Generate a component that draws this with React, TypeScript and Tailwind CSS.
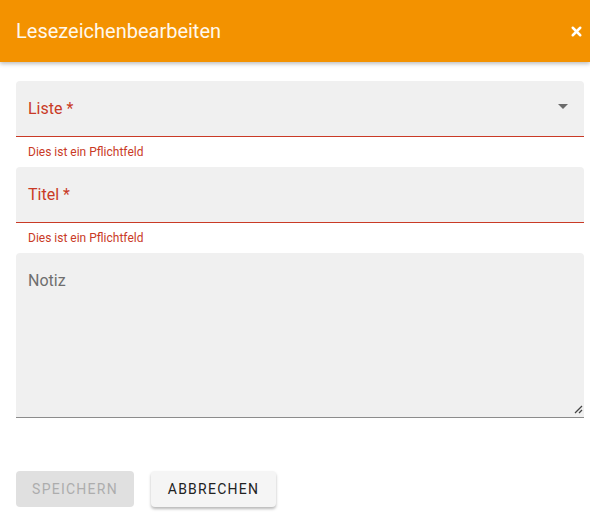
import { X } from 'lucide-react';

const red = 'text-[#c93a26]';

export default function App() {
  return (
    <div className="w-[590px] h-[522px] bg-white font-['Roboto',sans-serif] overflow-hidden">
      {/* Header */}
      <div className="h-[62px] bg-[#f39200] flex items-center justify-between pl-4 pr-[6px] shadow-[0_2px_4px_rgba(0,0,0,0.25)] relative z-10">
        <h1 className="text-[20px] text-[#fff8ec] font-normal">Lesezeichenbearbeiten</h1>
        <X className="w-[15px] h-[15px] text-white" strokeWidth={4} />
      </div>

      <div className="pl-4 pr-[6px] pt-[19px]">
        {/* Liste */}
        <div className="h-[56px] bg-[#f0f0f0] rounded-t border-b border-[#c93a26] flex items-center justify-between pl-3 pr-[16px]">
          <span className={`text-[16px] ${red}`}>Liste *</span>
          <svg width="10" height="5" viewBox="0 0 10 5" className="-mt-[4px]">
            <path d="M0 0 L10 0 L5 5 Z" fill="#6b6b6b" />
          </svg>
        </div>
        <div className={`h-[30px] pl-3 pt-[7px] text-[12px] ${red} leading-[16px]`}>Dies ist ein Pflichtfeld</div>

        {/* Titel */}
        <div className="h-[56px] bg-[#f0f0f0] rounded-t border-b border-[#c93a26] flex items-center pl-3">
          <span className={`text-[16px] ${red}`}>Titel *</span>
        </div>
        <div className={`h-[30px] pl-3 pt-[7px] text-[12px] ${red} leading-[16px]`}>Dies ist ein Pflichtfeld</div>

        {/* Notiz */}
        <div className="h-[165px] bg-[#f0f0f0] rounded-t border-b border-[#8c8c8c] relative pl-3 pt-[16px]">
          <span className="text-[16px] text-[#6e6e6e]">Notiz</span>
          <svg width="10" height="10" viewBox="0 0 10 10" className="absolute right-[1px] bottom-[3px]">
            <path d="M9 2 L2 9 M9 6 L6 9" stroke="#444" strokeWidth="1.3" />
          </svg>
        </div>

        {/* Buttons */}
        <div className="flex gap-[17px] mt-[53px]">
          <button className="h-[36px] w-[118px] rounded bg-[#e0e0e0] text-[14px] font-normal tracking-[1.25px] text-[#adadad]">
            SPEICHERN
          </button>
          <button className="h-[36px] w-[125px] rounded bg-[#f5f5f5] text-[14px] font-normal tracking-[1.25px] text-[#222] shadow-[0_2px_3px_rgba(0,0,0,0.28)]">
            ABBRECHEN
          </button>
        </div>
      </div>
    </div>
  );
}
